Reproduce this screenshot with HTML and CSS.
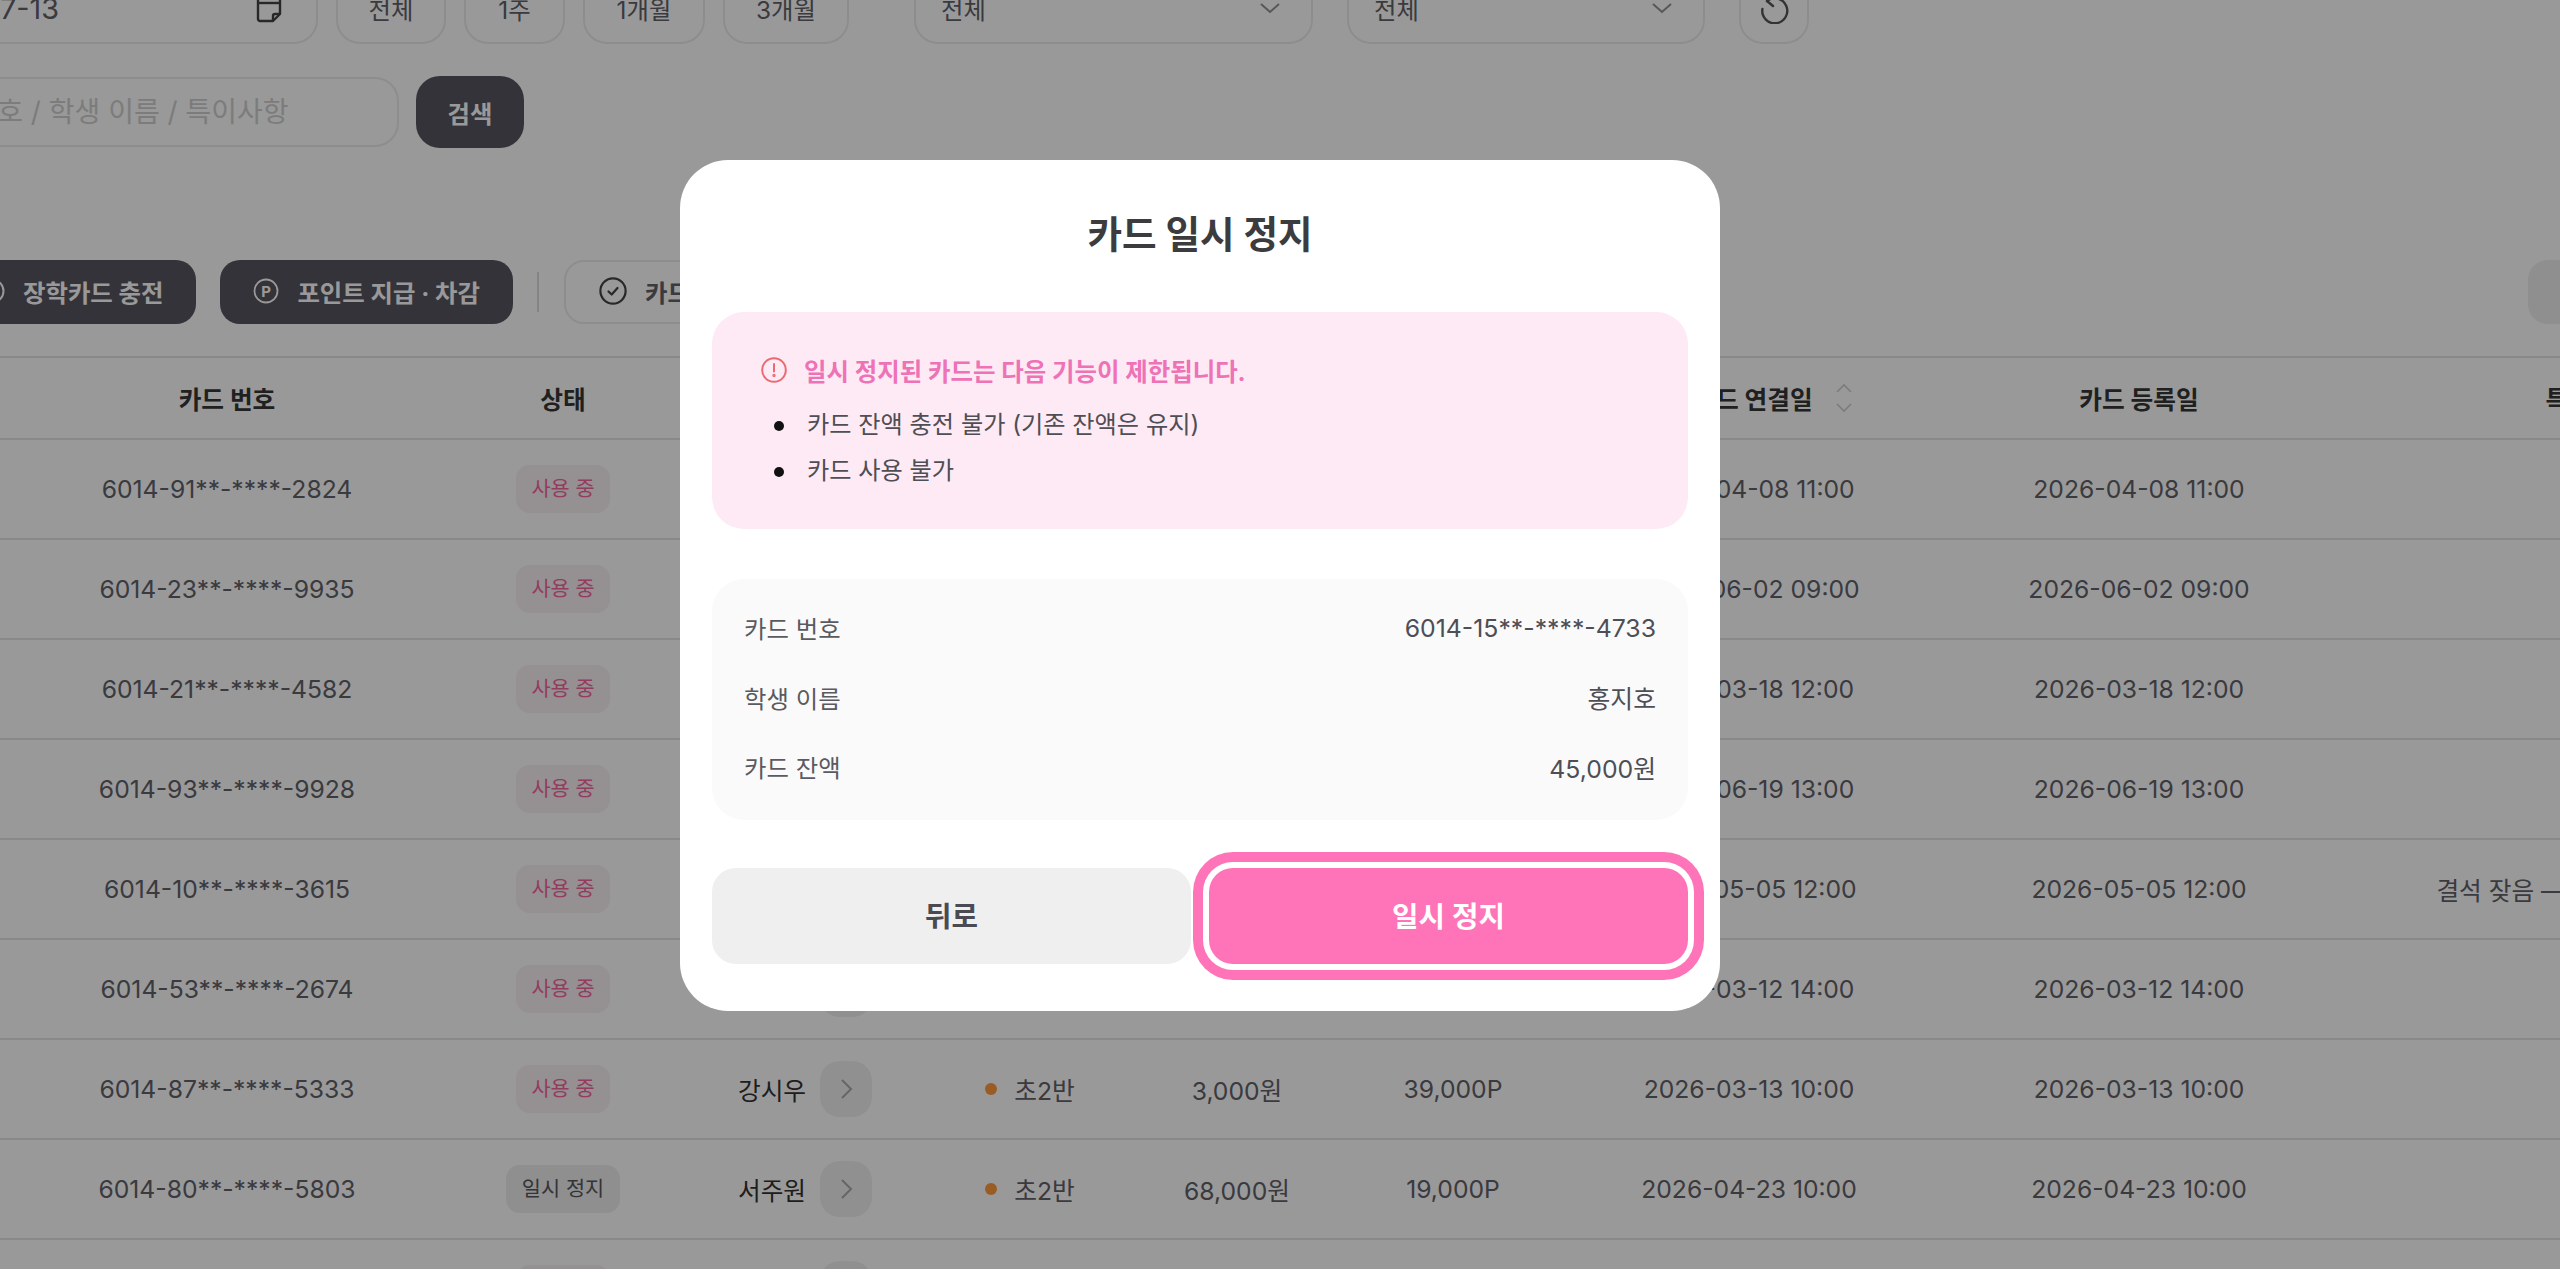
FILE: index.html
```html
<!DOCTYPE html>
<html lang="ko">
<head>
  <meta charset="UTF-8">
  <meta name="viewport" content="width=device-width, initial-scale=1.0">
  <title>카드 일시 정지</title>

  <link rel="stylesheet" href="styles.css">
</head>

<body>
  <main class="page">
    <!--필터-->
    <div class="filter-row">
      <div class="date-input">
        <span>2026-07-13</span>
        <svg class="calendar-icon" viewBox="0 0 26 30" fill="none" stroke="#444" stroke-width="2.4" stroke-linejoin="round"><path d="M2 4a2 2 0 0 1 2-2h18a2 2 0 0 1 2 2v17l-7 7H4a2 2 0 0 1-2-2z"/><path d="M2 10h22"/><path d="M17 28v-5a2 2 0 0 1 2-2h5"/></svg>
      </div>
      <button class="range-btn w-all">전체</button>
      <button class="range-btn w-week">1주</button>
      <button class="range-btn w-month">1개월</button>
      <button class="range-btn w-quarter">3개월</button>
      <div class="select select-a">
        <span>전체</span>
        <svg class="select-arrow" viewBox="0 0 22 12" fill="none" stroke="#929292" stroke-width="2"><path d="M2 2l9 8 9-8"/></svg>
      </div>
      <div class="select select-b">
        <span>전체</span>
        <svg class="select-arrow" viewBox="0 0 22 12" fill="none" stroke="#929292" stroke-width="2"><path d="M2 2l9 8 9-8"/></svg>
      </div>
      <button class="reset-btn">
        <svg viewBox="0 0 30 32" width="30" height="32" fill="none" stroke="#555" stroke-width="2.4" stroke-linecap="round" stroke-linejoin="round"><path d="M8 9a12.5 12.5 0 1 1-4.6 8"/><path d="M14 3L8 9l6 5"/></svg>
      </button>
    </div>

    <div class="search-row">
      <input class="search-input" type="text" placeholder="카드 번호 / 학생 이름 / 특이사항">
      <button class="dark-btn search-btn">검색</button>
    </div>

    <!--버튼-->
    <div class="action-row">
      <button class="dark-btn action-btn charge-btn">
        <svg class="btn-icon" viewBox="0 0 26 26" fill="none" stroke="#fff" stroke-width="2"><circle cx="13" cy="13" r="11.5"/></svg>
        장학카드 충전
      </button>
      <button class="dark-btn action-btn">
        <svg class="btn-icon" viewBox="0 0 26 26" fill="none" stroke="#fff" stroke-width="1.8"><circle cx="13" cy="13" r="11.5"/><text x="13" y="18.5" text-anchor="middle" class="icon-letter">P</text></svg>
        포인트 지급 · 차감
      </button>
      <span class="divider"></span>
      <button class="line-btn action-btn">
        <svg class="btn-icon check-icon" viewBox="0 0 28 28" fill="none" stroke="#444" stroke-width="2.2" stroke-linecap="round" stroke-linejoin="round"><circle cx="14" cy="14" r="12.6"/><path d="M9.5 14.5l3.2 3 5.8-6.5"/></svg>
        카드 일시 정지
      </button>
      <button class="export-btn">내보내기</button>
    </div>

    <!--표-->
    <div class="table">
      <div class="row head">
        <span></span>
        <span>카드 번호</span>
        <span>상태</span>
        <span>학생 이름</span>
        <span>반</span>
        <span>카드 잔액</span>
        <span>포인트</span>
        <span class="sort-cell">카드 연결일
          <svg class="sort-icon" viewBox="0 0 18 30" fill="none" stroke="#cfcfcf" stroke-width="1.6"><path d="M2 9l7-7 7 7"/><path d="M2 21l7 7 7-7"/></svg>
        </span>
        <span>카드 등록일</span>
        <span>특이사항</span>
      </div>

      <div class="row">
        <span></span><span>6014-91**-****-2824</span><span><b class="chip on">사용 중</b></span>
        <span class="name">김민준<a class="go"><svg viewBox="0 0 13 20" fill="none" stroke="#aaa" stroke-width="2"><path d="M2 1l9 9-9 9"/></svg></a></span>
        <span class="class-cell"><i class="dot"></i>초1반</span><span>12,000원</span><span>8,000P</span>
        <span>2026-04-08 11:00</span><span>2026-04-08 11:00</span><span></span>
      </div>
      <div class="row">
        <span></span><span>6014-23**-****-9935</span><span><b class="chip on">사용 중</b></span>
        <span class="name">이서연<a class="go"><svg viewBox="0 0 13 20" fill="none" stroke="#aaa" stroke-width="2"><path d="M2 1l9 9-9 9"/></svg></a></span>
        <span class="class-cell"><i class="dot"></i>초1반</span><span>25,000원</span><span>4,000P</span>
        <span>2026-06-02 09:00</span><span>2026-06-02 09:00</span><span></span>
      </div>
      <div class="row">
        <span></span><span>6014-21**-****-4582</span><span><b class="chip on">사용 중</b></span>
        <span class="name">박도윤<a class="go"><svg viewBox="0 0 13 20" fill="none" stroke="#aaa" stroke-width="2"><path d="M2 1l9 9-9 9"/></svg></a></span>
        <span class="class-cell"><i class="dot"></i>초1반</span><span>7,000원</span><span>15,000P</span>
        <span>2026-03-18 12:00</span><span>2026-03-18 12:00</span><span></span>
      </div>
      <div class="row">
        <span></span><span>6014-93**-****-9928</span><span><b class="chip on">사용 중</b></span>
        <span class="name">최하은<a class="go"><svg viewBox="0 0 13 20" fill="none" stroke="#aaa" stroke-width="2"><path d="M2 1l9 9-9 9"/></svg></a></span>
        <span class="class-cell"><i class="dot"></i>초2반</span><span>31,000원</span><span>22,000P</span>
        <span>2026-06-19 13:00</span><span>2026-06-19 13:00</span><span></span>
      </div>
      <div class="row">
        <span></span><span>6014-10**-****-3615</span><span><b class="chip on">사용 중</b></span>
        <span class="name">정우진<a class="go"><svg viewBox="0 0 13 20" fill="none" stroke="#aaa" stroke-width="2"><path d="M2 1l9 9-9 9"/></svg></a></span>
        <span class="class-cell"><i class="dot"></i>초2반</span><span>9,000원</span><span>6,000P</span>
        <span>2026-05-05 12:00</span><span>2026-05-05 12:00</span><span>결석 잦음 — 학부모 상담 필요</span>
      </div>
      <div class="row">
        <span></span><span>6014-53**-****-2674</span><span><b class="chip on">사용 중</b></span>
        <span class="name">윤지아<a class="go"><svg viewBox="0 0 13 20" fill="none" stroke="#aaa" stroke-width="2"><path d="M2 1l9 9-9 9"/></svg></a></span>
        <span class="class-cell"><i class="dot"></i>초2반</span><span>18,000원</span><span>11,000P</span>
        <span>2026-03-12 14:00</span><span>2026-03-12 14:00</span><span></span>
      </div>
      <div class="row">
        <span></span><span>6014-87**-****-5333</span><span><b class="chip on">사용 중</b></span>
        <span class="name">강시우<a class="go"><svg viewBox="0 0 13 20" fill="none" stroke="#aaa" stroke-width="2"><path d="M2 1l9 9-9 9"/></svg></a></span>
        <span class="class-cell"><i class="dot"></i>초2반</span><span>3,000원</span><span>39,000P</span>
        <span>2026-03-13 10:00</span><span>2026-03-13 10:00</span><span></span>
      </div>
      <div class="row">
        <span></span><span>6014-80**-****-5803</span><span><b class="chip off">일시 정지</b></span>
        <span class="name">서주원<a class="go"><svg viewBox="0 0 13 20" fill="none" stroke="#aaa" stroke-width="2"><path d="M2 1l9 9-9 9"/></svg></a></span>
        <span class="class-cell"><i class="dot"></i>초2반</span><span>68,000원</span><span>19,000P</span>
        <span>2026-04-23 10:00</span><span>2026-04-23 10:00</span><span></span>
      </div>
      <div class="row">
        <span></span><span>6014-42**-****-1187</span><span><b class="chip on">사용 중</b></span>
        <span class="name">한예준<a class="go"><svg viewBox="0 0 13 20" fill="none" stroke="#aaa" stroke-width="2"><path d="M2 1l9 9-9 9"/></svg></a></span>
        <span class="class-cell"><i class="dot"></i>초2반</span><span>5,000원</span><span>2,000P</span>
        <span>2026-05-11 10:00</span><span>2026-05-11 10:00</span><span></span>
      </div>
    </div>
  </main>

  <!--모달-->
  <div class="backdrop">
    <section class="modal">
      <h2 class="modal-title">카드 일시 정지</h2>

      <div class="notice">
        <p class="notice-title">
          <svg class="notice-icon" viewBox="0 0 26 26" fill="none" stroke="#ea6a70" stroke-width="2"><circle cx="13" cy="13" r="11.8"/><path d="M13 7v7.5" stroke-linecap="round"/><circle cx="13" cy="18.4" r="0.7"/></svg>
          일시 정지된 카드는 다음 기능이 제한됩니다.
        </p>
        <ul class="notice-list">
          <li>카드 잔액 충전 불가 (기존 잔액은 유지)</li>
          <li>카드 사용 불가</li>
        </ul>
      </div>

      <dl class="info">
        <div class="info-row"><dt>카드 번호</dt><dd>6014-15**-****-4733</dd></div>
        <div class="info-row"><dt>학생 이름</dt><dd>홍지호</dd></div>
        <div class="info-row"><dt>카드 잔액</dt><dd>45,000원</dd></div>
      </dl>

      <div class="modal-btns">
        <button class="back-btn">뒤로</button>
        <button class="confirm-btn">일시 정지</button>
      </div>
    </section>
  </div>
</body>

</html>
```

FILE: styles.css
```css
*{margin: 0; padding: 0; box-sizing: border-box;}
html, body{height: 100%; overflow: hidden;}
body{
  background-color: #fff;
  color: #616169;
  font-family: Inter, "Noto Sans CJK KR", sans-serif;
  font-size: 24.7px;
}
button{font-family: inherit; font-size: 24.4px; cursor: pointer;}

/*스크롤된 화면처럼 왼쪽, 위쪽이 잘린다*/
.page{
  width: 2972px;
  margin: -28px 0 0 -112px;
}

/*필터*/
.filter-row{
  display: flex;
  height: 72px;
}
.date-input,
.select,
.range-btn,
.reset-btn{
  height: 72px;
  border: 2px solid #ececec;
  border-radius: 24px;
  background: #fff;
  color: #616169;
}
.date-input{
  width: 430px;
  display: flex;
  align-items: center;
  justify-content: space-between;
  padding: 0 34px 0 8px;
  font-size: 28.8px;
}
.calendar-icon{width: 26px; height: 30px;}
.range-btn{margin-left: 18px;}
.w-all{width: 110px;}
.w-week{width: 101px;}
.w-month{width: 122px;}
.w-quarter{width: 126px;}
.select{
  display: flex;
  align-items: center;
  justify-content: space-between;
  padding: 0 30px 0 25px;
  font-size: 24.4px;
}
.select-a{width: 399px; margin-left: 65px;}
.select-b{width: 358px; margin-left: 34px;}
.select-arrow{width: 22px; height: 12px;}
.reset-btn{
  width: 70px;
  margin-left: 34px;
  display: flex;
  align-items: center;
  justify-content: center;
}

.search-row{
  display: flex;
  align-items: center;
  gap: 17px;
  margin-top: 32px;
}
.search-input{
  width: 511px;
  height: 70px;
  border: 2px solid #ececec;
  border-radius: 24px;
  padding: 0 22px;
  font-family: inherit;
  font-size: 28px;
  outline: none;
}
.search-input::placeholder{color: #cfcfcf;}

.dark-btn{
  border: 0;
  background: #56565f;
  color: #fff;
  font-weight: 700;
}
.search-btn{
  width: 108px;
  height: 72px;
  border-radius: 24px;
}

/*버튼*/
.action-row{
  display: flex;
  align-items: center;
  margin-top: 112px;
  height: 64px;
}
.action-btn{
  display: flex;
  align-items: center;
  gap: 18px;
  height: 64px;
  padding: 0 33px 2px;
  border-radius: 20px;
  margin-right: 24px;
  white-space: nowrap;
}
.charge-btn{margin-left: 59px; padding-left: 32px;}
.btn-icon{width: 26px; height: 26px;}
.check-icon{width: 28px; height: 28px;}
.icon-letter{
  font-size: 15px;
  fill: #fff;
  stroke: none;
  font-family: Inter, sans-serif;
}
.divider{
  width: 2px;
  height: 40px;
  margin-right: 25px;
  background: #dcdcdc;
}
.line-btn{
  border: 2px solid #ececec;
  background: #fff;
  color: #616169;
  font-weight: 700;
}
.export-btn{
  width: 332px;
  height: 64px;
  margin-left: auto;
  border: 0;
  border-radius: 20px;
  background: #eee;
}

/*표*/
.table{
  margin-top: 32px;
  border-top: 2px solid #e4e4e4;
}
.row{
  display: grid;
  grid-template-columns: 112px 454px 218px 266px 184px 230px 202px 390px 390px 514px;
  height: 100px;
  border-bottom: 2px solid #e4e4e4;
  text-align: center;
}
.row > span{
  display: flex;
  align-items: center;
  justify-content: center;
  white-space: nowrap;
}
.head{
  height: 82px;
  color: #363636;
  font-weight: 700;
}
.sort-icon{
  width: 18px;
  height: 30px;
  margin: 0 -48px 0 22px;
}
.chip{
  display: inline-block;
  height: 48px;
  line-height: 48px;
  padding: 0 15.5px;
  border-radius: 14px;
  font-size: 20.8px;
  font-weight: 400;
}
.chip.on{background: #f9f1f4; color: #f5649f;}
.chip.off{background: #eee; color: #58585e;}
.row > .name{color: #333;}
.go{
  display: flex;
  align-items: center;
  justify-content: center;
  width: 52px;
  height: 56px;
  margin-left: 14px;
  border-radius: 20px;
  background: #f0f0f0;
}
.go svg{width: 13px; height: 20px;}
.dot{
  width: 12px;
  height: 12px;
  margin-right: 17px;
  border-radius: 50%;
  background: #ff9a3c;
}

/*모달*/
.backdrop{
  position: fixed;
  inset: 0;
  padding: 160px 0 0 680px;
  background: rgba(0, 0, 0, .4);
}
.modal{
  width: 1040px;
  height: 851px;
  padding: 45px 32px 0;
  border-radius: 48px;
  background: #fff;
}
.modal-title{
  height: 60px;
  line-height: 60px;
  text-align: center;
  font-size: 37.6px;
  font-weight: 700;
  color: #3c3c3e;
}
.notice{
  height: 217px;
  margin-top: 47px;
  padding: 41px 0 0 49px;
  border-radius: 32px;
  background: #fdeaf4;
}
.notice-title{
  display: flex;
  align-items: center;
  gap: 17px;
  height: 34px;
  color: #ee72b6;
  font-size: 24.45px;
  font-weight: 700;
}
.notice-icon{width: 26px; height: 26px;}
.notice-list{
  margin-top: 15px;
  padding-left: 46px;
  list-style: none;
  color: #4e4e56;
  font-size: 24.2px;
}
.notice-list li{line-height: 46px;}
.notice-list li::before{
  content: "";
  display: inline-block;
  width: 10px;
  height: 10px;
  margin: 0 23px 0 -33px;
  border-radius: 50%;
  background: #111;
  vertical-align: middle;
}

.info{
  height: 241px;
  margin-top: 50px;
  padding: 14px 32px 0;
  border-radius: 32px;
  background: #fafafa;
}
.info-row{
  display: flex;
  justify-content: space-between;
  align-items: center;
  height: 69.5px;
}
.info-row dt{color: #5a5a62; font-size: 24.4px;}
.info-row dd{color: #4e4e56; font-size: 24.8px;}

.modal-btns{
  display: flex;
  gap: 18px;
  margin-top: 48px;
}
.back-btn,
.confirm-btn{
  flex: 1;
  height: 96px;
  padding-bottom: 3px;
  border: 0;
  border-radius: 24px;
  font-size: 28.8px;
  font-weight: 700;
}
.back-btn{background: #efefef; color: #4a4a52;}
.confirm-btn{
  background: #ff74b8;
  color: #fff;
  box-shadow: 0 0 0 6px #fff, 0 0 0 16px #ff74b8;
}
```
